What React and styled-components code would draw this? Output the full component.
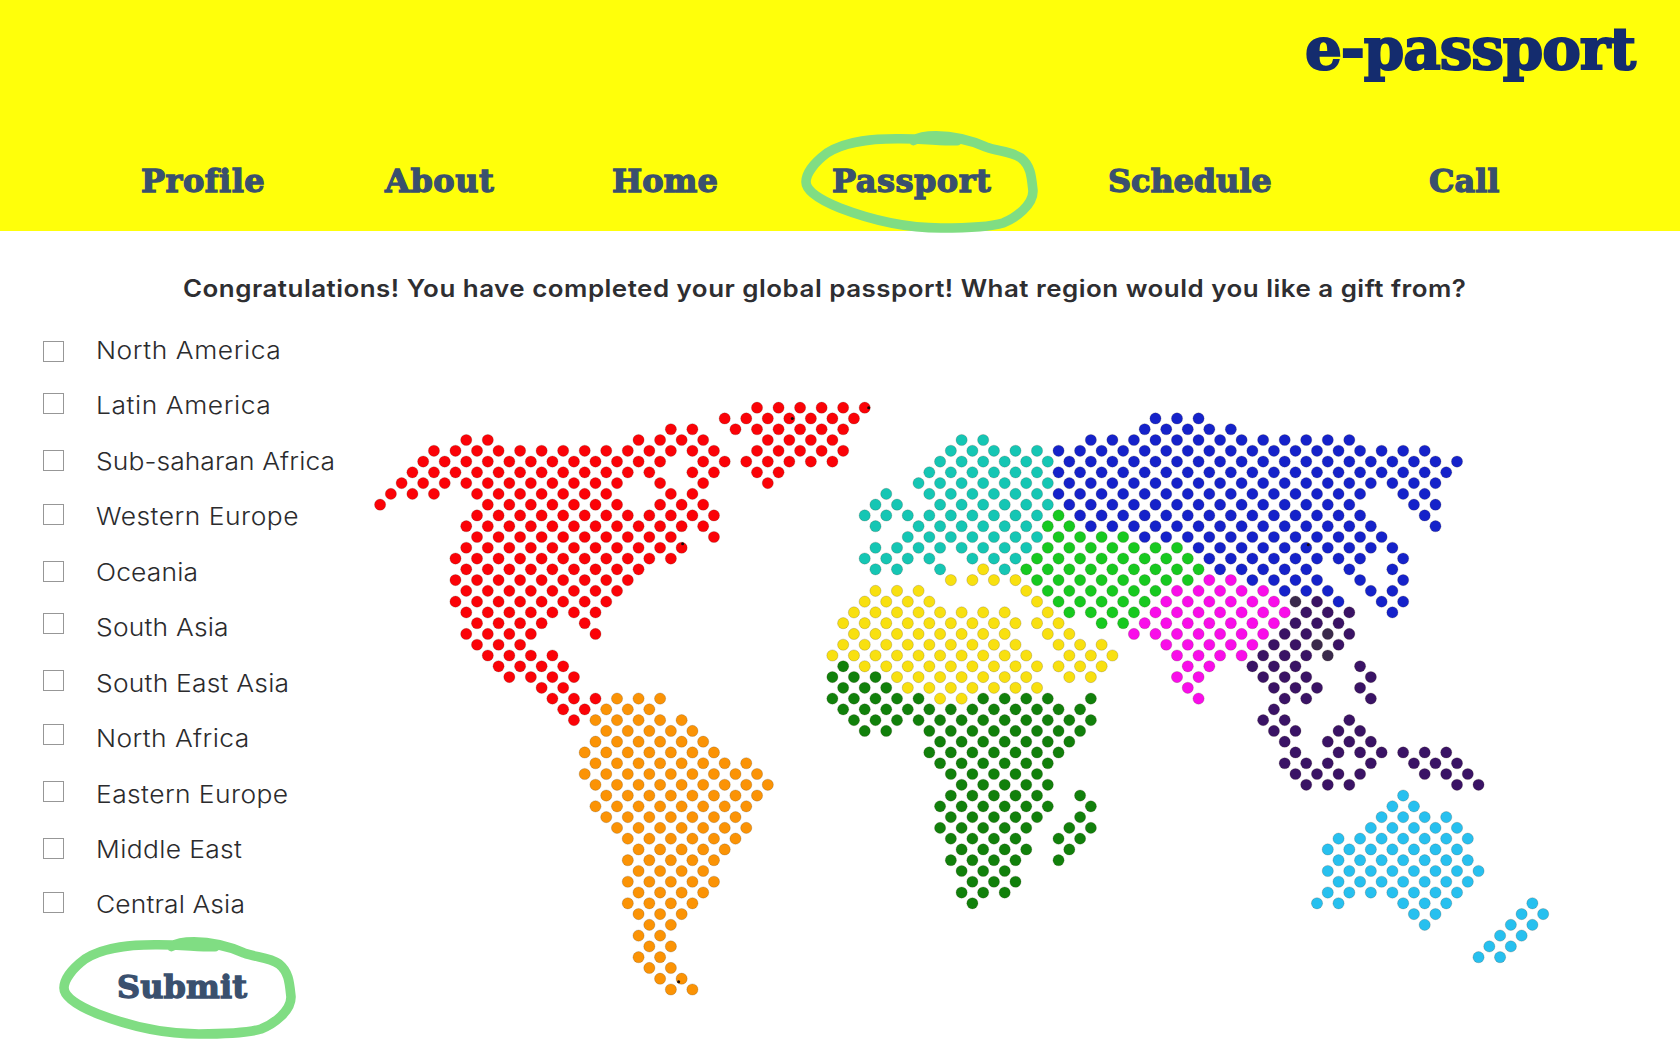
import React from "react";
import styled, { createGlobalStyle } from "styled-components";

const GlobalStyle = createGlobalStyle`
  * { box-sizing: border-box; }
  body {
    margin: 0;
    background: #fff;
    font-family: Inter, "Open Sans", sans-serif;
    overflow: hidden;
  }
`;

const slab = `"DejaVu Serif", "Liberation Serif", serif`;

const Page = styled.div`
  width: 1680px;
  height: 1050px;
  display: flex;
  flex-direction: column;
  overflow: hidden;
`;

const Header = styled.header`
  flex: none;
  height: 231px;
  background: #ffff0a;
  display: flex;
  flex-direction: column;
`;

const Brand = styled.div`
  align-self: flex-end;
  margin-right: 45px;
  height: 100px;
  line-height: 99px;
  font-family: ${slab};
  font-weight: 700;
  font-size: 58px;
  letter-spacing: -1.1px;
  color: #142c6e;
  -webkit-text-stroke: 2px #142c6e;
  paint-order: stroke;
  stroke-linejoin: round;
`;

const Nav = styled.nav`
  display: grid;
  grid-template-columns: 244px 227px 220px 276px 321px auto;
  padding: 56px 0 0 141px;
`;

const NavLink = styled.a`
  position: relative;
  justify-self: start;
  white-space: nowrap;
  line-height: 50px;
  font-family: ${slab};
  font-weight: 700;
  font-size: 32px;
  letter-spacing: ${(p) => p.$track}px;
  color: #3a506e;
  -webkit-text-stroke: 1.3px #3a506e;
`;

const Ring = styled.svg`
  position: absolute;
  left: ${(p) => p.$left}px;
  top: ${(p) => p.$top}px;
  width: 240px;
  height: 106px;
  pointer-events: none;
`;

const Question = styled.h1`
  flex: none;
  margin: 0;
  padding: 34px 0 0 183px;
  height: 91px;
  line-height: 48px;
  font-size: 24px;
  font-weight: 600;
  letter-spacing: 0.46px;
  white-space: nowrap;
  color: #2e2e31;

  span {
    display: inline-block;
    transform: scaleX(1.08);
    transform-origin: left;
  }
`;

const Content = styled.main`
  display: flex;
`;

const Side = styled.form`
  flex: none;
  width: 365px;
`;

const Option = styled.label`
  display: grid;
  grid-template-columns: 53px 1fr;
  align-items: start;
  height: 55.45px;
  padding-left: 43px;
`;

const Box = styled.input`
  appearance: none;
  margin: ${(p) => p.$drop}px 0 0;
  width: 21px;
  height: 21px;
  border: 1px solid #979797;
  background: #fff;
`;

const OptionText = styled.span`
  justify-self: start;
  line-height: 57.4px;
  font-size: 24px;
  font-weight: 360;
  letter-spacing: ${(p) => p.$track}px;
  transform: scaleX(1.1);
  transform-origin: left;
  white-space: nowrap;
  color: #2b2b2d;
`;

const Submit = styled.button`
  position: relative;
  display: block;
  margin: 30px 0 0 117px;
  padding: 0;
  border: 0;
  background: none;
  line-height: 50px;
  font-family: ${slab};
  font-weight: 700;
  font-size: 32px;
  letter-spacing: 0.1px;
  color: #3a506e;
  -webkit-text-stroke: 1.3px #3a506e;
`;

const MapFigure = styled.svg`
  flex: none;
  width: 1200px;
  height: 610px;
  margin-top: 73px;
`;

function Circled({ left, top }) {
  return (
    <Ring $left={left} $top={top} viewBox="0 0 240 106" fill="none">
      <path
        d="M113.5 11.6C119 8 128 6.9 136 6.9C155 7 170 11 186 18C198 22.5 211 22 221 29C231 37 231.5 48 233 62C233 76 216 89 203 94C190 98 160 99 141 99C100 99 66 89 40 79C20 71 6 62 6 53C6 44 15 33 27 24C47 11 76 9.5 100 9.7C125 9.8 140 12 157 11.8"
        stroke="#80dd83"
        strokeWidth="9.6"
        strokeLinejoin="round"
        strokeLinecap="round"
      />
    </Ring>
  );
}

const links = [
  ["Profile", 0.5],
  ["About", 0.55],
  ["Home", 0],
  ["Passport", 0.5],
  ["Schedule", -0.1],
  ["Call", 0],
];

const options = [
  ["North America", 19, 0.52],
  ["Latin America", 15.55, 0.52],
  ["Sub-saharan Africa", 17.1, 0.08],
  ["Western Europe", 15.65, 0.46],
  ["Oceania", 17.2, 0.15],
  ["South Asia", 13.75, 0.18],
  ["South East Asia", 15.3, 0.2],
  ["North Africa", 13.85, 0.37],
  ["Eastern Europe", 15.4, 0.38],
  ["Middle East", 16.95, 0.33],
  ["Central Asia", 15.5, 0.11],
];

// Every region lists "row:first-last,..." runs; dots in a run sit on every second column.
const regions = [
  {
    color: "#fb0207",
    runs: "0:35-45 1:32-44 2:27-29,33-43 3:8-10,24-30,36-42 4:5-31,35-43 5:4-26,30-42 6:3-25,29-31,35-37 7:2-22,26,30,36 8:1-5,9-21,27-29 9:0,10-22,26-30 10:9-31 11:8-30 12:9-27,31 13:8-28 14:7-27 15:8-24 16:7-23 17:8-22 18:7-21 19:8-16,18-20 20:9-15,19 21:8-14,20 22:9-13 23:10-16 24:11-17 25:12-18 26:15-17 27:16-20 28:17-19 29:18",
  },
  {
    color: "#fb9305",
    runs: "27:22-26 28:21-25 29:20-28 30:21-29 31:20-30 32:19-31 33:20-34 34:19-35 35:20-36 36:21-35 37:20-34 38:21-33 39:22-34 40:23-33 41:24-32 42:23-31 43:24-30 44:23-31 45:24-30 46:23-29 47:24-28 48:25-27 49:24-26 50:25-27 51:24-26 52:25-27 53:26-28 54:27-29",
  },
  {
    color: "#15c6b4",
    runs: "3:54-56 4:53-61 5:52-62 6:51-61 7:50-62 8:47,51-61 9:46-48,52-62 10:45-61 11:46,50-60 12:49-61 13:46-60 14:45-51,55-59 15:46-48,52,58",
  },
  {
    color: "#f8e010",
    runs: "15:56 16:53,55-59 17:46-50,60 18:45-51,61 19:44-58,62 20:43-59,61-63 21:44-58,62-64 22:43-59,63-67 23:42-60,64-68 24:45-61,63-67 25:48-60,64-66 26:49-61 27:52-54",
  },
  {
    color: "#11800b",
    runs: "24:43 25:42-46 26:43-47 27:42-50,56-62,66 28:43-65 29:44-48,50-66 30:45-47,51-65 31:52-64 32:51-63 33:52-62 34:53-61 35:54-62 36:53-61,65 37:52-62,66 38:53-61,65 39:52-60,64-66 40:53-59,63-65 41:54-60,64 42:53-59,63 43:54-58 44:55-59 45:54-58 46:55",
  },
  {
    color: "#17c91f",
    runs: "10:63 11:62-64 12:63-69 13:62-74 14:61-75 15:60-76 16:61-75 17:62-72 18:63-71 19:64-70 20:67-69",
  },
  {
    color: "#1522ca",
    runs: "1:72-76 2:71-79 3:66-90 4:63-97 5:64-100 6:63-99 7:64-98 8:63-91,95-97 9:64-90,96-98 10:65-91,97 11:66-92,98 12:71-93 13:76-94 14:77-91,95 15:78-86,90,94 16:81-87,91,95 17:84-88,92-94 18:89,93-95 19:94",
  },
  {
    color: "#f90de9",
    runs: "16:77-79 17:74-82 18:73-83 19:72-84 20:71-83 21:70-82 22:73-81 23:74-80 24:75-77 25:74-76 26:75 27:76",
  },
  {
    color: "#3a1365",
    runs: "18:87 19:86-90 20:85-89 21:84-86,90 22:83-85,89 23:82-86 24:81-85,91 25:82-86,92 26:83-87,91 27:84-86,92 28:83 29:82-84,90 30:83-85,89-91 31:84,88-92 32:85,89-93,95-99 33:84-88,92,96-100 34:85-91,97-101 35:86-90,100-102",
  },
  { color: "#3a2a4c", runs: "18:85 21:88 22:87 23:88" },
  {
    color: "#27c0ef",
    runs: "36:95 37:94-96 38:93-99 39:92-100 40:89-101 41:88-100 42:89-101 43:88-102 44:89-101 45:88-100 46:87-89,95-99,107 47:96-98,106-108 48:97,105-107 49:104-106 50:103-105 51:102-104",
  },
];

// Small dark marks left on a few dots: column, row, horizontal and vertical shift.
const specks = [
  [45, 0, 4, 0],
  [38, 1, 3, 0],
  [28, 13, 1, -4],
  [28, 53, -3, 3],
  [86, 13, 2, -3],
];

function expand(runs) {
  const dots = [];
  runs.split(" ").forEach((line) => {
    const [row, spans] = line.split(":");
    spans.split(",").forEach((span) => {
      const [first, last = first] = span.split("-").map(Number);
      for (let col = first; col <= last; col += 2) dots.push([col, Number(row)]);
    });
  });
  return dots;
}

const dotX = (col) => 15.1 + col * 10.769;
const dotY = (row) => 12.7 + row * 10.774;

function WorldMap() {
  return (
    <MapFigure viewBox="0 0 1200 610">
      {regions.map((region) => (
        <g key={region.color} fill={region.color}>
          {expand(region.runs).map(([col, row]) => (
            <circle
              key={`${col}-${row}`}
              cx={dotX(col)}
              cy={dotY(row)}
              r="5.6"
              stroke="#403020"
              strokeOpacity="0.25"
              strokeWidth="0.8"
            />
          ))}
        </g>
      ))}
      {specks.map(([col, row, dx, dy]) => (
        <circle key={`${col}-${row}`} cx={dotX(col) + dx} cy={dotY(row) + dy} r="1.5" fill="#1a0a08" />
      ))}
    </MapFigure>
  );
}

export default function App() {
  return (
    <Page>
      <GlobalStyle />
      <Header>
        <Brand>e-passport</Brand>
        <Nav>
          {links.map(([name, track]) => (
            <NavLink key={name} $track={track}>
              {name}
              {name === "Passport" && <Circled left={-32} top={-27} />}
            </NavLink>
          ))}
        </Nav>
      </Header>
      <Question>
        <span>
          Congratulations! You have completed your global passport! What region would you like a gift from?
        </span>
      </Question>
      <Content>
        <Side>
          {options.map(([name, drop, track]) => (
            <Option key={name}>
              <Box type="checkbox" $drop={drop} />
              <OptionText $track={track}>{name}</OptionText>
            </Option>
          ))}
          <Submit type="button">
            Submit
            <Circled left={-59} top={-27} />
          </Submit>
        </Side>
        <WorldMap />
      </Content>
    </Page>
  );
}
